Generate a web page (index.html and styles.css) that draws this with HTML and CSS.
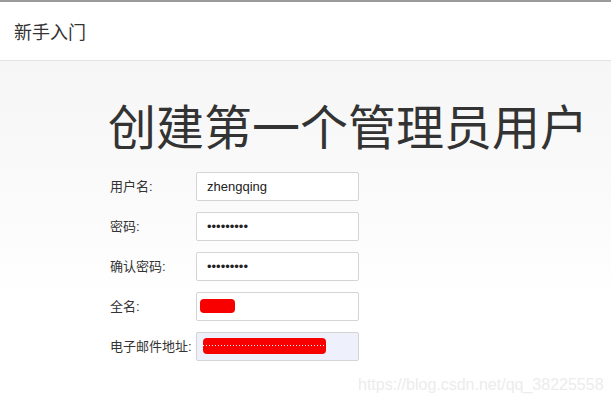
FILE: index.html
```html
<!DOCTYPE html>
<html lang="zh-CN">
<head>
    <meta charset="UTF-8">
    <title>新手入门</title>
    <link rel="stylesheet" href="styles.css">
</head>
<body>
    <!-- Header -->
    <div class="header">
        <h4 class="header-title">新手入门</h4>
    </div>

    <!-- Setup Body -->
    <div class="setup-body">
        <h1 class="setup-title">创建第一个管理员用户</h1>
        <form class="setup-form">
            <div class="form-row">
                <label>用户名:</label>
                <input type="text" value="zhengqing">
            </div>
            <div class="form-row">
                <label>密码:</label>
                <input type="password" value="123456789">
            </div>
            <div class="form-row">
                <label>确认密码:</label>
                <input type="password" value="123456789">
            </div>
            <div class="form-row">
                <label>全名:</label>
                <div class="fake-input">
                    <span class="redact redact-name"></span>
                </div>
            </div>
            <div class="form-row">
                <label>电子邮件地址:</label>
                <div class="fake-input autofill">
                    <span class="redact redact-mail"></span>
                </div>
            </div>
        </form>
        <div class="watermark">https://blog.csdn.net/qq_38225558</div>
    </div>
</body>
</html>
```
FILE: styles.css
```css
/* General */
body {
    margin: 0;
    padding: 0;
    font-family: "Liberation Sans", "Noto Sans CJK SC", sans-serif;
    color: #333;
    background: #fff;
    border-top: 2px solid #9a9a9a;
    height: 402px;
    overflow: hidden;
}

/* Header */
.header {
    height: 58px;
    background: #fff;
    border-bottom: 1px solid #e3e3e3;
    display: flex;
    align-items: center;
    padding-left: 14px;
}

.header-title {
    margin: 0;
    font-size: 18px;
    font-weight: normal;
    color: #333;
}

/* Body */
.setup-body {
    height: 343px;
    background: linear-gradient(to bottom, #f6f6f6 0%, #fbfbfb 45%, #fff 70%);
    padding-left: 108px;
    position: relative;
}

.setup-title {
    margin: 0;
    padding-top: 40px;
    font-size: 48px;
    font-weight: normal;
    line-height: 56px;
    color: #333;
}

.setup-form {
    margin-top: 9px;
    padding-left: 2px;
}

.form-row {
    display: flex;
    align-items: center;
    height: 40px;
}

.form-row label {
    width: 86px;
    font-size: 13px;
    color: #333;
    margin-top: -2px;
}

.form-row input,
.fake-input {
    box-sizing: border-box;
    width: 163px;
    height: 29px;
    border: 1px solid #d4d4d4;
    border-radius: 2px;
    padding: 0 10px;
    font-family: "Liberation Sans", sans-serif;
    font-size: 13px;
    color: #222;
    background: #fff;
}

.fake-input {
    display: flex;
    align-items: center;
    padding: 0 2px 0 3px;
}

.autofill {
    background: #eef1fb;
    padding-left: 6px;
}

.redact {
    display: block;
    background: #f80000;
    border-radius: 4px;
}

.redact-name {
    width: 35px;
    height: 14px;
}

.redact-mail {
    width: 123px;
    height: 16px;
    background-image: linear-gradient(to right, #fff 50%, transparent 50%);
    background-size: 3px 1px;
    background-repeat: repeat-x;
    background-position: 18px 7px;
    background-color: #f80000;
}

.watermark {
    position: absolute;
    left: 358px;
    top: 315px;
    font-size: 16px;
    color: #ececec;
}
```
